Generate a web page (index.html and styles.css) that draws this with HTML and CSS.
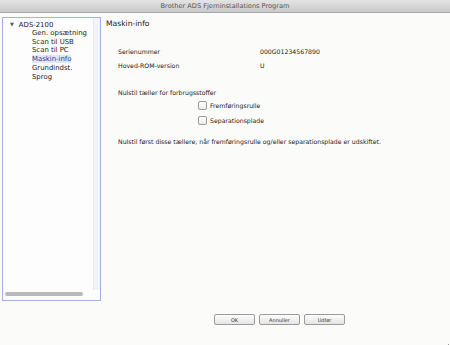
FILE: index.html
```html
<!DOCTYPE html>
<html lang="da">
  <head>
    <meta charset="UTF-8" />
    <title>Brother ADS Fjerninstallations Program</title>
    <link rel="stylesheet" href="styles.css">
  </head>
  <body>
    <div class="window">
      <div class="titlebar">Brother ADS Fjerninstallations Program</div>

      <div class="main">
        <div class="sidebar">
          <div class="tree-area">
            <div class="tree">
              <div class="tree-root"><span class="arrow">&#9660;</span>ADS-2100</div>
              <div class="tree-item">Gen. opsætning</div>
              <div class="tree-item">Scan til USB</div>
              <div class="tree-item">Scan til PC</div>
              <div class="tree-item"><span class="selected">Maskin-info</span></div>
              <div class="tree-item">Grundindst.</div>
              <div class="tree-item">Sprog</div>
            </div>
            <div class="vtrack"></div>
          </div>
          <div class="hscroll"><div class="hthumb"></div></div>
        </div>

        <div class="content">
          <h1 class="page-title">Maskin-info</h1>
          <div class="info-row">
            <span class="label">Serienummer</span>
            <span class="value">000G01234567890</span>
          </div>
          <div class="info-row">
            <span class="label">Hoved-ROM-version</span>
            <span class="value">U</span>
          </div>

          <p class="section">Nulstil tæller for forbrugsstoffer</p>
          <label class="check"><span class="box"></span>Fremføringsrulle</label>
          <label class="check"><span class="box"></span>Separationsplade</label>

          <p class="note">Nulstil først disse tællere, når fremføringsrulle og/eller separationsplade er udskiftet.</p>
        </div>
      </div>

      <div class="footer">
        <button>OK</button>
        <button>Annuller</button>
        <button>Udfør</button>
      </div>
      <div class="grip">
        <svg width="8" height="8" viewBox="0 0 8 8">
          <path d="M1 8 L8 1 M4 8 L8 4 M7 8 L8 7" stroke="#999" stroke-width="1" fill="none"/>
        </svg>
      </div>
    </div>
  </body>
</html>
```

FILE: styles.css
```css
body {
  margin: 0;
  font-family: "Lucida Grande", "DejaVu Sans", sans-serif;
  background: #fbfbfa;
  color: #222;
  overflow: hidden;
}

.window {
  position: relative;
  width: 450px;
  height: 345px;
  display: flex;
  flex-direction: column;
}

.titlebar {
  height: 12px;
  line-height: 12px;
  text-align: center;
  font-size: 6.6px;
  color: #555;
  background: linear-gradient(#e4e4e4, #c9c9c9);
  border-bottom: 1px solid #a8a8a8;
}

.main {
  display: flex;
  padding: 4px 0 0 2px;
  height: 284px;
}

.sidebar {
  width: 97px;
  height: 282px;
  border: 1px solid #9fb3e0;
  background: #fdfdfd;
  display: flex;
  flex-direction: column;
}

.tree-area {
  flex: 1;
  display: flex;
}

.tree {
  flex: 1;
  padding: 2px 0 0 7px;
  font-size: 6.9px;
  line-height: 8.8px;
}

.tree-root,
.tree-item {
  height: 8.8px;
}

.arrow {
  font-size: 5px;
  color: #555;
  margin-right: 5px;
  vertical-align: 1px;
}

.tree-item {
  padding-left: 22px;
}

.selected {
  color: #1d3f9c;
  background: #dfe8f8;
}

.vtrack {
  width: 6px;
  margin-bottom: 2px;
  border-left: 1px solid #eaeaea;
  background: #f3f3f3;
}

.hscroll {
  height: 6px;
  padding: 0 0 2px 2px;
}

.hthumb {
  width: 78px;
  height: 4px;
  border-radius: 2px;
  background: #b9b9b9;
}

.content {
  flex: 1;
  padding: 0 0 0 5px;
  font-size: 6.2px;
}

.page-title {
  margin: 1px 0 0;
  font-size: 7.6px;
  line-height: 11px;
  font-weight: normal;
  color: #222;
}

.info-row {
  display: flex;
  margin: 0 0 0 12px;
  height: 14px;
  line-height: 14px;
}

.info-row:first-of-type {
  margin-top: 16px;
}

.label {
  width: 142px;
}

.section {
  margin: 15px 0 0 12px;
  line-height: 10px;
}

.check {
  display: flex;
  align-items: center;
  margin-left: 92px;
  height: 15px;
}

.box {
  width: 7px;
  height: 7px;
  border: 1px solid #9a9a9a;
  border-radius: 2px;
  background: linear-gradient(#fff, #ececec);
  margin-right: 3px;
}

.note {
  margin: 9px 0 0 12px;
  line-height: 10px;
}

.footer {
  display: flex;
  gap: 4px;
  padding: 13px 0 0 214px;
}

.footer button {
  box-sizing: border-box;
  flex: none;
  width: 41px;
  height: 11px;
  padding: 0;
  font-family: inherit;
  font-size: 5px;
  color: #333;
  border: 1px solid #9b9b9b;
  border-radius: 2px;
  background: linear-gradient(#fdfdfd, #e4e4e4);
}

.grip {
  position: absolute;
  right: 1px;
  bottom: 1px;
  width: 8px;
  height: 8px;
}
```
